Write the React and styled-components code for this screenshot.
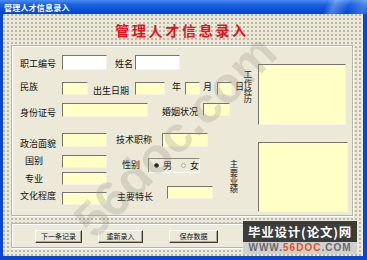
import React from "react";
import styled, { createGlobalStyle } from "styled-components";

const GlobalStyle = createGlobalStyle`
  html, body {
    margin: 0;
    padding: 0;
    background: #ece9d8;
  }
  * {
    box-sizing: border-box;
  }
`;

const FONT = `"Noto Sans CJK SC", "Noto Sans", sans-serif`;

const Window = styled.div`
  position: relative;
  width: 367px;
  height: 260px;
  background: #0b46d2;
  display: flex;
  flex-direction: column;
  overflow: hidden;
  font-family: ${FONT};
`;

const TitleBar = styled.div`
  height: 14px;
  flex: none;
  display: flex;
  align-items: center;
  padding-left: 4px;
  background:
    linear-gradient(112deg, transparent 0 304px, rgba(255, 255, 255, 0.28) 312px, transparent 326px, rgba(255, 255, 255, 0.22) 340px, transparent 356px),
    linear-gradient(to bottom, #4a8cf0 0%, #1d63e0 30%, #0a50d8 70%, #0846c6 100%);
  color: #fff;
  font-size: 8px;
  font-weight: 700;
  letter-spacing: 0.2px;
`;

const Client = styled.div`
  flex: 1;
  margin: 0 4px 4px 3px;
  padding: 0 10px 0 8px;
  background-color: #ece9d8;
  background-image: radial-gradient(circle at 1px 1px, #b9b5a6 0.7px, transparent 0.9px);
  background-size: 4px 4px;
  display: flex;
  flex-direction: column;
`;

const Heading = styled.h1`
  margin: 0;
  height: 31px;
  flex: none;
  display: flex;
  align-items: center;
  justify-content: center;
  padding: 1px 0 0 0;
  color: #e3121b;
  font-size: 14px;
  font-weight: 700;
  letter-spacing: 2.7px;
`;

const Frame = styled.div`
  flex: none;
  background: #ece9d8;
  border: 1px solid #b8b4a2;
  box-shadow: inset 1px 1px 0 #fff, 1px 1px 0 #fff;
`;

const MainPanel = styled(Frame)`
  height: 171px;
  display: flex;
`;

const LeftArea = styled.div`
  width: 217px;
  flex: none;
  padding: 9px 0 0 8px;
  display: flex;
  flex-direction: column;
`;

const Row = styled.div`
  height: ${(p) => p.$h}px;
  flex: none;
  display: flex;
  align-items: flex-start;
`;

const Label = styled.span`
  flex: none;
  width: ${(p) => p.$w}px;
  margin-left: ${(p) => p.$ml || 0}px;
  margin-top: ${(p) => p.$mt || 0}px;
  height: 13px;
  line-height: 13px;
  font-size: 9px;
  color: #111;
  white-space: nowrap;
`;

const TextBox = styled.div`
  flex: none;
  width: ${(p) => p.$w}px;
  height: ${(p) => p.$h || 13}px;
  margin-left: ${(p) => p.$ml || 0}px;
  margin-top: ${(p) => p.$mt || 0}px;
  background: ${(p) => (p.$white ? "#ffffff" : "#ffffc6")};
  border-top: 1px solid #77746a;
  border-left: 1px solid #77746a;
  border-right: 1px solid #f4f2ea;
  border-bottom: 1px solid #f4f2ea;
`;

const RadioGroup = styled.div`
  flex: none;
  width: 52px;
  height: 15px;
  margin-left: ${(p) => p.$ml}px;
  margin-top: ${(p) => p.$mt}px;
  display: flex;
  align-items: center;
  gap: 4px;
  padding-left: 5px;
  border-top: 1px solid #8d8a7e;
  border-left: 1px solid #8d8a7e;
  border-right: 1px solid #fff;
  border-bottom: 1px solid #fff;
  font-size: 9px;
  color: #111;
`;

const Radio = styled.span`
  width: 5px;
  height: 5px;
  border-radius: 50%;
  flex: none;
  background: ${(p) => (p.$on ? "#222" : "#f4f2ea")};
  border: 1px solid ${(p) => (p.$on ? "#555" : "#b0ad9f")};
  margin-left: ${(p) => p.$ml || 0}px;
`;

const RightArea = styled.div`
  flex: 1;
  display: flex;
  flex-direction: column;
`;

const Section = styled.div`
  display: flex;
  align-items: flex-start;
  margin-top: ${(p) => p.$mt}px;
`;

const VLabel = styled.span`
  flex: none;
  width: 10px;
  margin-left: ${(p) => p.$ml || 0}px;
  margin-top: ${(p) => p.$mt || 0}px;
  writing-mode: vertical-rl;
  text-orientation: upright;
  font-size: 8.3px;
  line-height: 10px;
  letter-spacing: 0;
  color: #111;
`;

const ButtonPanel = styled(Frame)`
  margin-top: 7px;
  height: 25px;
  display: flex;
  align-items: flex-start;
  padding-top: 6px;
`;

const Button = styled.button`
  flex: none;
  width: ${(p) => p.$w}px;
  height: 13px;
  margin-left: ${(p) => p.$ml}px;
  padding: 0;
  background: #ece9d8;
  border: 1px solid;
  border-color: #fff #3c3a34 #3c3a34 #fff;
  box-shadow: inset -1px -1px 0 #aca899;
  font-family: ${FONT};
  font-size: 7px;
  line-height: 11px;
  color: #111;
`;

const Stamp = styled.div`
  position: absolute;
  left: 243px;
  top: 221px;
  width: 114px;
  display: flex;
  flex-direction: column;
  pointer-events: none;
`;

const StampTop = styled.div`
  height: 21px;
  background: rgba(44, 44, 44, 0.92);
  color: #fff;
  font-size: 12.5px;
  font-weight: 700;
  line-height: 21px;
  text-align: center;
  letter-spacing: 0.8px;
  white-space: nowrap;
  overflow: hidden;
`;

const StampBottom = styled.div`
  height: 12px;
  background: rgba(206, 206, 206, 0.92);
  color: #6a6a6a;
  font-family: "Liberation Sans", Arial, sans-serif;
  font-size: 10px;
  font-weight: 700;
  line-height: 12px;
  text-align: center;
  letter-spacing: 1px;

  span {
    color: #e5511d;
  }
`;

const DiagonalMark = styled.div`
  position: absolute;
  left: 175px;
  top: 136px;
  transform: translate(-50%, -50%) rotate(-45deg);
  font-family: "Liberation Sans", Arial, sans-serif;
  font-size: 50px;
  font-weight: 700;
  color: rgba(150, 148, 130, 0.28);
  white-space: nowrap;
  pointer-events: none;
`;

export default function App() {
  return (
    <>
      <GlobalStyle />
      <Window>
        <TitleBar>管理人才信息录入</TitleBar>
        <Client>
          <Heading>管理人才信息录入</Heading>
          <MainPanel>
            <LeftArea>
              <Row $h={27}>
                <Label $w={36} $mt={1.5}>职工编号</Label>
                <TextBox $white $w={45} $h={15} $ml={6} />
                <Label $w={18} $ml={8} $mt={1.5}>姓名</Label>
                <TextBox $white $w={45} $h={15} $ml={2} />
              </Row>
              <Row $h={21}>
                <Label $w={18} $mt={-2}>民族</Label>
                <TextBox $w={26} $ml={24} />
                <Label $w={36} $ml={5} $mt={2}>出生日期</Label>
                <TextBox $w={30} $ml={6} />
                <Label $w={9} $ml={7} $mt={-2.5}>年</Label>
                <TextBox $w={15} $ml={4} />
                <Label $w={9} $ml={3} $mt={-2.5}>月</Label>
                <TextBox $w={15} $ml={5} />
                <Label $w={9} $ml={3} $mt={-2.5}>日</Label>
              </Row>
              <Row $h={30}>
                <Label $w={36} $mt={2.5}>身份证号</Label>
                <TextBox $w={86} $h={14} $ml={6} />
                <Label $w={36} $ml={14} $mt={2}>婚姻状况</Label>
                <TextBox $w={27} $ml={5} />
              </Row>
              <Row $h={22}>
                <Label $w={36} $mt={3.5}>政治面貌</Label>
                <TextBox $w={45} $h={14} $ml={6} />
                <Label $w={36} $ml={9} $mt={-0.5}>技术职称</Label>
                <TextBox $w={46} $h={14} $ml={10} />
              </Row>
              <Row $h={17}>
                <Label $w={18} $ml={5} $mt={-1.5}>国别</Label>
                <TextBox $w={45} $ml={19} />
                <Label $w={18} $ml={15} $mt={3}>性别</Label>
                <RadioGroup $ml={8} $mt={3}>
                  <Radio $on />
                  <span>男</span>
                  <Radio $ml={5} />
                  <span>女</span>
                </RadioGroup>
              </Row>
              <Row $h={14}>
                <Label $w={18} $ml={5} $mt={-0.5}>专业</Label>
                <TextBox $w={45} $ml={19} />
              </Row>
              <Row $h={19}>
                <Label $w={36} $mt={2.5}>文化程度</Label>
                <TextBox $w={45} $ml={6} $mt={6} />
                <Label $w={36} $ml={10} $mt={3.5}>主要特长</Label>
                <TextBox $w={46} $ml={14} />
              </Row>
            </LeftArea>
            <RightArea>
              <Section $mt={18}>
                <VLabel $ml={14} $mt={6}>工作经历</VLabel>
                <TextBox $w={88} $h={61} $ml={5} />
              </Section>
              <Section $mt={17}>
                <VLabel $mt={18}>主要业绩</VLabel>
                <TextBox $w={90} $h={70} $ml={19} />
              </Section>
            </RightArea>
          </MainPanel>
          <ButtonPanel>
            <Button $w={47} $ml={23}>下一条记录</Button>
            <Button $w={45} $ml={16}>重新录入</Button>
            <Button $w={49} $ml={26}>保存数据</Button>
          </ButtonPanel>
        </Client>
        <DiagonalMark>56doc.com</DiagonalMark>
        <Stamp>
          <StampTop>毕业设计(论文)网</StampTop>
          <StampBottom>
            WWW.<span>56DOC</span>.COM
          </StampBottom>
        </Stamp>
      </Window>
    </>
  );
}
